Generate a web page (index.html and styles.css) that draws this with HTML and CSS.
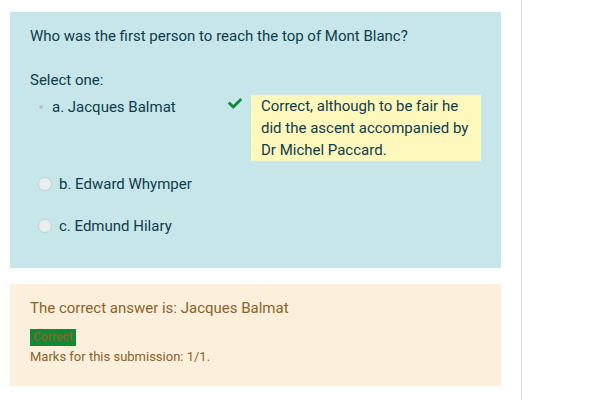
FILE: index.html
```html
<!DOCTYPE html>
<html lang="en">

<head>
    <meta charset="UTF-8">
    <meta name="viewport" content="width=device-width, initial-scale=1.0">
    <title>Quiz question</title>
    <link rel="stylesheet" href="styles.css">
</head>

<body>
    <div class="page">
        <div class="main">
            <div class="formulation">
                <div class="qtext">Who was the first person to reach the top of Mont Blanc?</div>
                <div class="prompt">Select one:</div>
                <div class="answer">
                    <div class="option option-chosen">
                        <div class="option-label">
                            <span class="dot"></span>
                            <span>a. Jacques Balmat</span>
                        </div>
                        <svg class="check" viewBox="0 72 512 368" width="14" height="11">
                            <path fill="currentColor" d="M173.9 439.4l-166.4-166.4c-10-10-10-26.2 0-36.2l36.2-36.2c10-10 26.2-10 36.2 0L192 312.7 432.1 72.6c10-10 26.2-10 36.2 0l36.2 36.2c10 10 10 26.2 0 36.2l-294.4 294.4c-10 10-26.2 10-36.2 0z"/>
                        </svg>
                        <div class="feedback">Correct, although to be fair he did the ascent accompanied by Dr Michel Paccard.</div>
                    </div>
                    <div class="option">
                        <span class="radio"></span>
                        <span>b. Edward Whymper</span>
                    </div>
                    <div class="option">
                        <span class="radio"></span>
                        <span>c. Edmund Hilary</span>
                    </div>
                </div>
            </div>

            <div class="outcome">
                <div class="rightanswer">The correct answer is: Jacques Balmat</div>
                <span class="badge">Correct</span>
                <div class="marks">Marks for this submission: 1/1.</div>
            </div>
        </div>
        <div class="side"></div>
    </div>
</body>

</html>
```

FILE: styles.css
```css
body {
    margin: 0;
    font-family: Roboto, "Liberation Sans", sans-serif;
    font-size: 15px;
    line-height: 22px;
    background-color: #fff;
}

.page {
    display: flex;
    min-height: 400px;
}

.main {
    width: 491px;
    padding: 12px 20px 0 10px;
    border-right: 1px solid #dcdcdc;
}

.formulation {
    background-color: #c7e6ea;
    color: #0e3c4b;
    padding: 13px 20px 31px;
}

.qtext {
    margin-bottom: 22px;
}

.prompt {
    margin-bottom: 4px;
}

.option {
    display: flex;
    align-items: center;
    padding-left: 8px;
    margin-bottom: 20px;
}

.option:last-child {
    margin-bottom: 0;
}

.option-chosen {
    align-items: flex-start;
    margin-bottom: 12px;
}

.option-label {
    display: flex;
    align-items: center;
    width: 190px;
    padding-top: 1px;
}

.dot {
    width: 4px;
    height: 4px;
    border-radius: 50%;
    background-color: #b4c3c6;
    margin: 0 9px 0 1px;
}

.radio {
    width: 12px;
    height: 12px;
    border-radius: 50%;
    border: 1px solid #c3d0d3;
    background-color: #e8eff0;
    margin-right: 7px;
}

.check {
    color: #0f8a36;
    margin-top: 3px;
}

.feedback {
    width: 210px;
    margin-left: 9px;
    padding: 0 10px;
    background-color: #fff8bd;
}

.outcome {
    margin-top: 16px;
    background-color: #fcefdc;
    color: #8a632a;
    padding: 13px 20px 19px;
}

.rightanswer {
    margin-bottom: 6px;
}

.badge {
    display: inline-block;
    background-color: #0e8a37;
    font-size: 12px;
    font-weight: 500;
    line-height: 17px;
    padding: 0 3px;
}

.marks {
    font-size: 13px;
    line-height: 20px;
}
```
